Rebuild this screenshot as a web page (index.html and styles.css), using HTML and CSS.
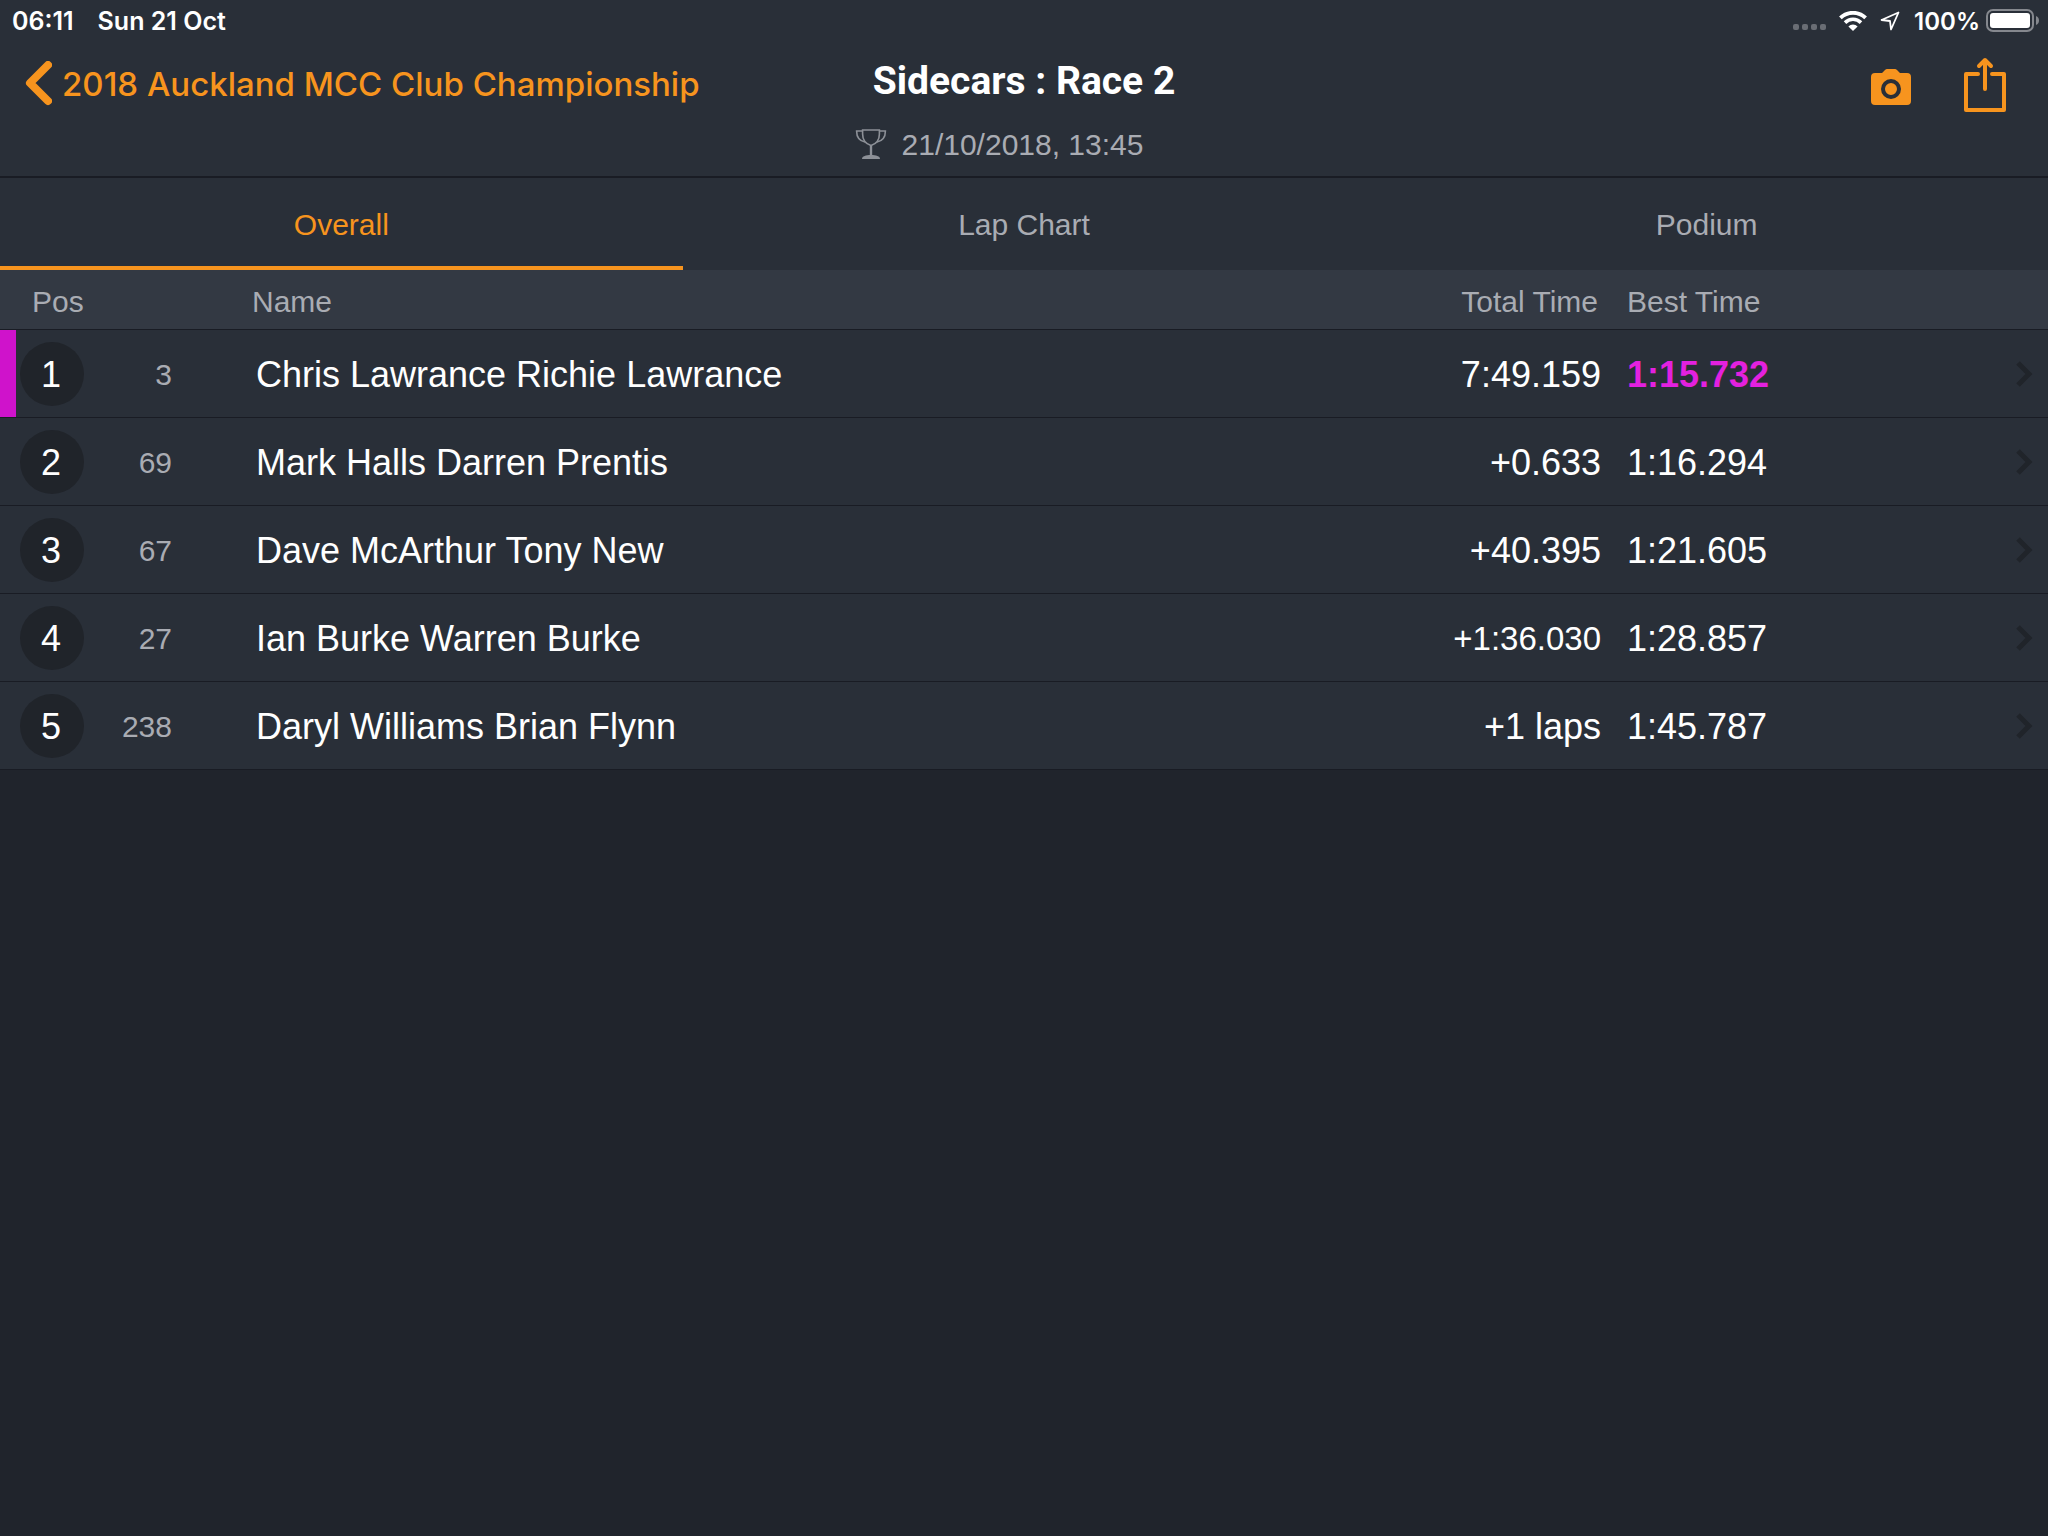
FILE: index.html
```html
<!DOCTYPE html>
<html lang="en">
<head>
  <meta charset="UTF-8">
  <meta name="viewport" content="width=device-width, initial-scale=1.0">
  <title>Sidecars : Race 2</title>
  <link rel="stylesheet" href="styles.css">
</head>
<body>
  <!-- Status bar -->
  <div class="status-bar">
    <div class="status-left">
      <span>06:11</span>
      <span>Sun 21 Oct</span>
    </div>
    <div class="status-right">
      <svg class="signal" width="34" height="20" viewBox="0 0 34 20" aria-hidden="true">
        <rect x="0" y="13" width="6" height="6" rx="2"/>
        <rect x="9" y="13" width="6" height="6" rx="2"/>
        <rect x="18" y="13" width="6" height="6" rx="2"/>
        <rect x="27" y="13" width="6" height="6" rx="2"/>
      </svg>
      <svg class="wifi" width="28" height="20" viewBox="0 0 28 20" aria-hidden="true">
        <path d="M1.4 6.9a18 18 0 0 1 25.2 0" fill="none" stroke="#fff" stroke-width="3.8"/>
        <path d="M6 11.6a11.4 11.4 0 0 1 16 0" fill="none" stroke="#fff" stroke-width="3.6"/>
        <path d="M9.4 15.4a6.6 6.6 0 0 1 9.2 0L14 20z" fill="#fff"/>
      </svg>
      <svg class="location" width="20" height="20" viewBox="0 0 20 20" aria-hidden="true">
        <path d="M18.500 1.500L1.500 9l8.500 1 1 8.500z" fill="none" stroke="#fff" stroke-width="1.8" stroke-linejoin="round"/>
      </svg>
      <span>100%</span>
      <svg class="battery" width="54" height="24" viewBox="0 0 54 24" aria-hidden="true">
        <rect x="1" y="1" width="46" height="21" rx="6" fill="none" stroke="#85888e" stroke-width="2"/>
        <rect x="4" y="4" width="40" height="15" rx="3" fill="#fff"/>
        <path d="M50 7c4 1 4 8 0 9z" fill="#85888e"/>
      </svg>
    </div>
  </div>

  <!-- Navigation -->
  <header class="nav">
    <a class="back" href="#">
      <svg width="28" height="46" viewBox="0 0 28 46" aria-hidden="true">
        <path d="M24 4L6 22l18 18" fill="none" stroke="currentColor" stroke-width="8" stroke-linecap="round" stroke-linejoin="round"/>
      </svg>
      <span>2018 Auckland MCC Club Championship</span>
    </a>
    <div class="heading">
      <h1>Sidecars : Race 2</h1>
      <p class="date">
        <svg width="32" height="30" viewBox="0 0 32 30" aria-hidden="true">
          <g fill="none" stroke="currentColor" stroke-width="1.6">
            <path d="M7.6 1h16.8v4c0 6-3.4 10-8.4 11.5C11 15 7.6 11 7.6 5z"/>
            <path d="M7.6 2H1.6c0 6 3.2 10 8.4 11M24.4 2h6c0 6-3.2 10-8.4 11"/>
            <path d="M16 16v11" stroke-width="2.4"/>
          </g>
          <path d="M7 30c0-3 4-4 9-4s9 1 9 4z" fill="currentColor"/>
        </svg>
        <span>21/10/2018, 13:45</span>
      </p>
    </div>
    <div class="actions">
      <button type="button" aria-label="Take photo">
        <svg class="camera" width="40" height="40" viewBox="0 0 40 40" aria-hidden="true">
          <path d="M4 8h7l3-3q1-1 2-1h8q1 0 2 1l3 3h7q4 0 4 4v24q0 4-4 4H4q-4 0-4-4V12q0-4 4-4z" fill="currentColor"/>
          <circle class="lens" cx="20" cy="24" r="8"/>
        </svg>
      </button>
      <button type="button" aria-label="Share">
        <svg width="42" height="56" viewBox="0 0 42 56" aria-hidden="true">
          <g fill="none" stroke="currentColor" stroke-width="4" stroke-linecap="round" stroke-linejoin="round">
            <path d="M14 17H2v36h38V17H28"/>
            <path d="M21 32V3M15 9l6-6 6 6"/>
          </g>
        </svg>
      </button>
    </div>
  </header>

  <!-- Tabs -->
  <nav class="tabs">
    <button type="button" class="tab active">Overall</button>
    <button type="button" class="tab">Lap Chart</button>
    <button type="button" class="tab">Podium</button>
  </nav>

  <!-- Results -->
  <table class="results">
    <colgroup>
      <col class="col-pos">
      <col class="col-number">
      <col class="col-name">
      <col class="col-total">
      <col class="col-best">
      <col class="col-more">
    </colgroup>
    <thead>
      <tr>
        <th class="pos">Pos</th>
        <th></th>
        <th class="name">Name</th>
        <th class="total">Total Time</th>
        <th class="best">Best Time</th>
        <th></th>
      </tr>
    </thead>
    <tbody>
      <tr class="fastest">
        <td class="pos"><span class="badge">1</span></td>
        <td class="number">3</td>
        <td class="name">Chris Lawrance Richie Lawrance</td>
        <td class="total">7:49.159</td>
        <td class="best">1:15.732</td>
        <td class="more"><a href="#" aria-label="Details"><svg width="18" height="26" viewBox="0 0 18 26"><path d="M3 2l11 11L3 24"/></svg></a></td>
      </tr>
      <tr>
        <td class="pos"><span class="badge">2</span></td>
        <td class="number">69</td>
        <td class="name">Mark Halls Darren Prentis</td>
        <td class="total">+0.633</td>
        <td class="best">1:16.294</td>
        <td class="more"><a href="#" aria-label="Details"><svg width="18" height="26" viewBox="0 0 18 26"><path d="M3 2l11 11L3 24"/></svg></a></td>
      </tr>
      <tr>
        <td class="pos"><span class="badge">3</span></td>
        <td class="number">67</td>
        <td class="name">Dave McArthur Tony New</td>
        <td class="total">+40.395</td>
        <td class="best">1:21.605</td>
        <td class="more"><a href="#" aria-label="Details"><svg width="18" height="26" viewBox="0 0 18 26"><path d="M3 2l11 11L3 24"/></svg></a></td>
      </tr>
      <tr>
        <td class="pos"><span class="badge">4</span></td>
        <td class="number">27</td>
        <td class="name">Ian Burke Warren Burke</td>
        <td class="total long">+1:36.030</td>
        <td class="best">1:28.857</td>
        <td class="more"><a href="#" aria-label="Details"><svg width="18" height="26" viewBox="0 0 18 26"><path d="M3 2l11 11L3 24"/></svg></a></td>
      </tr>
      <tr>
        <td class="pos"><span class="badge">5</span></td>
        <td class="number">238</td>
        <td class="name">Daryl Williams Brian Flynn</td>
        <td class="total">+1 laps</td>
        <td class="best">1:45.787</td>
        <td class="more"><a href="#" aria-label="Details"><svg width="18" height="26" viewBox="0 0 18 26"><path d="M3 2l11 11L3 24"/></svg></a></td>
      </tr>
    </tbody>
  </table>
</body>
</html>
```

FILE: styles.css
```css
* {
  margin: 0;
  padding: 0;
  box-sizing: border-box;
}

body {
  font-family: "Liberation Sans", Arial, sans-serif;
  font-size: 30px;
  background-color: #20242c;
  color: #fff;
}

svg {
  display: block;
}

button {
  font: inherit;
  color: inherit;
  background: none;
  border: none;
  cursor: pointer;
}

a {
  color: inherit;
  text-decoration: none;
}

/* Status bar */
.status-bar {
  display: flex;
  justify-content: space-between;
  align-items: center;
  height: 40px;
  padding: 2px 8px 0 12px;
  background-color: #292f38;
  font-family: Inter, sans-serif;
  font-size: 24px;
  font-weight: 600;
}

.status-left {
  display: flex;
  gap: 24px;
  font-size: 25px;
}

.status-right {
  display: flex;
  align-items: center;
}

.signal {
  fill: #696d74;
  margin-right: 12px;
}

.wifi {
  margin-right: 13px;
}

.location {
  margin-right: 14px;
}

.battery {
  margin-left: 6px;
}

/* Navigation */
.nav {
  display: grid;
  grid-template-columns: minmax(0, 1fr) auto minmax(0, 1fr);
  align-items: start;
  padding: 12px 0;
  background-color: #292f38;
  border-bottom: 2px solid #191c24;
}

.back {
  display: flex;
  align-items: center;
  gap: 10px;
  height: 64px;
  padding-left: 24px;
  color: #f7941e;
  font-family: Inter, sans-serif;
  font-size: 33px;
  font-weight: 500;
  white-space: nowrap;
}

.heading {
  text-align: center;
}

.heading h1 {
  font-family: Roboto, sans-serif;
  font-size: 39px;
  line-height: 58px;
}

.date {
  display: flex;
  justify-content: center;
  align-items: center;
  gap: 15px;
  height: 40px;
  margin-top: 14px;
  padding-right: 50px;
  color: #a9acb3;
}

.date span {
  padding-top: 2px;
}

.date svg {
  color: #8c9097;
}

.actions {
  display: flex;
  justify-content: flex-end;
  align-items: center;
  gap: 53px;
  height: 66px;
  padding-right: 42px;
  color: #f7941e;
}

.lens {
  fill: none;
  stroke: #292f38;
  stroke-width: 4;
}

/* Tabs */
.tabs {
  display: flex;
  background-color: #292f38;
}

.tab {
  flex: 1;
  height: 92px;
  padding-top: 6px;
  border-bottom: 4px solid transparent;
  color: #a9acb3;
}

.tab.active {
  color: #f7941e;
  border-bottom-color: #f7941e;
}

/* Results */
.results {
  width: 100%;
  table-layout: fixed;
  border-spacing: 0;
}

.col-pos {
  width: 84px;
}

.col-number {
  width: 88px;
}

.col-total {
  width: 220px;
}

.col-best {
  width: 166px;
}

.col-more {
  width: 280px;
}

th {
  height: 60px;
  padding-top: 4px;
  background-color: #333943;
  border-bottom: 1px solid #191c24;
  color: #a9acb3;
  font-weight: normal;
  text-align: left;
  white-space: nowrap;
}

td {
  height: 88px;
  padding-top: 3px;
  background-color: #292f38;
  border-bottom: 1px solid #191c24;
  font-size: 36px;
  white-space: nowrap;
}

th.pos {
  padding-left: 32px;
}

td.pos {
  padding-top: 0;
  padding-left: 20px;
}

.fastest td.pos {
  box-shadow: inset 16px 0 #cf13cb;
}

.badge {
  display: flex;
  justify-content: center;
  align-items: center;
  width: 64px;
  height: 64px;
  padding: 2px 2px 0 0;
  border-radius: 50%;
  background-color: #20242a;
}

.number {
  color: #a9acb3;
  font-size: 30px;
  text-align: right;
}

th.name {
  padding-left: 80px;
}

td.name {
  padding-left: 84px;
}

.total {
  padding-right: 1px;
  text-align: right;
}

th.total {
  padding-right: 4px;
}

td.long {
  font-size: 33px;
}

.best {
  padding-left: 25px;
}

.fastest .best {
  color: #e321df;
  font-weight: bold;
}

td.more {
  padding-top: 0;
}

.more a {
  display: flex;
  justify-content: flex-end;
  padding-right: 15px;
}

.more path {
  fill: none;
  stroke: #20242a;
  stroke-width: 5;
}
```
